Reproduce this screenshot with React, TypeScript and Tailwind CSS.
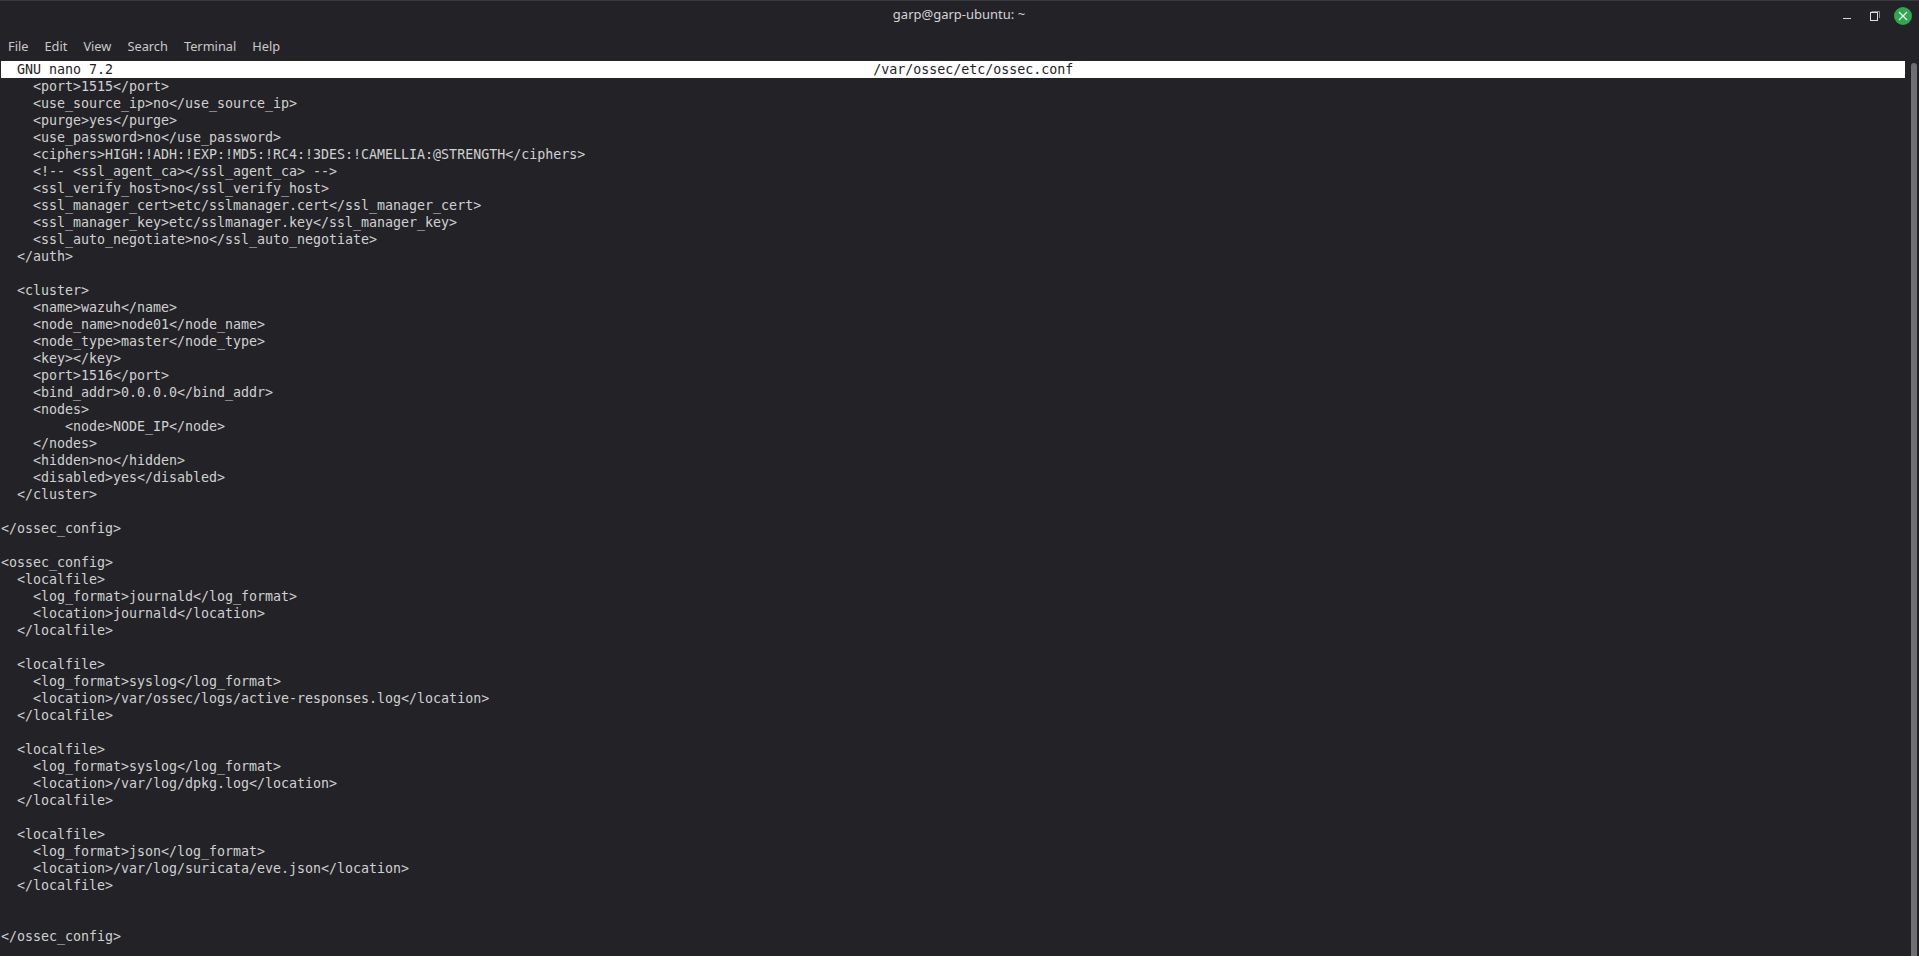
const menus = ['File', 'Edit', 'View', 'Search', 'Terminal', 'Help'];

const lines = [
  '    <port>1515</port>',
  '    <use_source_ip>no</use_source_ip>',
  '    <purge>yes</purge>',
  '    <use_password>no</use_password>',
  '    <ciphers>HIGH:!ADH:!EXP:!MD5:!RC4:!3DES:!CAMELLIA:@STRENGTH</ciphers>',
  '    <!-- <ssl_agent_ca></ssl_agent_ca> -->',
  '    <ssl_verify_host>no</ssl_verify_host>',
  '    <ssl_manager_cert>etc/sslmanager.cert</ssl_manager_cert>',
  '    <ssl_manager_key>etc/sslmanager.key</ssl_manager_key>',
  '    <ssl_auto_negotiate>no</ssl_auto_negotiate>',
  '  </auth>',
  '',
  '  <cluster>',
  '    <name>wazuh</name>',
  '    <node_name>node01</node_name>',
  '    <node_type>master</node_type>',
  '    <key></key>',
  '    <port>1516</port>',
  '    <bind_addr>0.0.0.0</bind_addr>',
  '    <nodes>',
  '        <node>NODE_IP</node>',
  '    </nodes>',
  '    <hidden>no</hidden>',
  '    <disabled>yes</disabled>',
  '  </cluster>',
  '',
  '</ossec_config>',
  '',
  '<ossec_config>',
  '  <localfile>',
  '    <log_format>journald</log_format>',
  '    <location>journald</location>',
  '  </localfile>',
  '',
  '  <localfile>',
  '    <log_format>syslog</log_format>',
  '    <location>/var/ossec/logs/active-responses.log</location>',
  '  </localfile>',
  '',
  '  <localfile>',
  '    <log_format>syslog</log_format>',
  '    <location>/var/log/dpkg.log</location>',
  '  </localfile>',
  '',
  '  <localfile>',
  '    <log_format>json</log_format>',
  '    <location>/var/log/suricata/eve.json</location>',
  '  </localfile>',
  '',
  '',
  '</ossec_config>',
];

const App = () => {
  return (
    <div className="h-[956px] w-[1919px] overflow-hidden bg-[#232327] border-t border-[#3a3a3c] flex flex-col">
      {/* Title bar */}
      <div className="h-[27px] grid grid-cols-[1fr_auto_1fr] items-center font-['Noto_Sans',sans-serif] text-[13px] text-[#d4d4d4]">
        <div />
        <div className="pr-px">garp@garp-ubuntu: ~</div>
        <div className="flex items-center justify-end gap-[14px] pr-[7px]">
          <svg width="10" height="10" viewBox="0 0 10 10" className="mt-[4px] mr-[3px]">
            <path d="M1 6.5h8" stroke="#d8d8d8" strokeWidth="1" />
          </svg>
          <svg width="11" height="11" viewBox="0 0 11 11" fill="none" className="mt-[4px]">
            <path d="M2.5 0.5h8V7" stroke="#8a8a8a" strokeWidth="1" />
            <rect x="1.5" y="1.5" width="7" height="8" stroke="#e0e0e0" strokeWidth="1" />
          </svg>
          <div className="w-[18px] h-[18px] mt-[3px] rounded-full bg-[#2fa750] flex items-center justify-center">
            <svg width="10" height="10" viewBox="0 0 10 10">
              <path d="M1 1l8 8M9 1l-8 8" stroke="#f0f0f0" strokeWidth="1.3" />
            </svg>
          </div>
        </div>
      </div>

      {/* Menu bar */}
      <div className="h-[33px] pt-[4px] flex items-center gap-[16px] pl-[8px] font-['Noto_Sans',sans-serif] text-[12.8px] text-[#c9c9c9]">
        {menus.map((menu) => (
          <span key={menu}>{menu}</span>
        ))}
      </div>

      {/* Terminal */}
      <div className="flex-1 flex min-h-0">
        <div className="flex-1 min-w-0 pl-px font-['DejaVu_Sans_Mono',monospace] text-[13.33px] leading-[17px] tracking-[-0.022px] text-[#d0d0d0] whitespace-pre">
          <div className="h-[17px] w-[1904px] bg-white text-[#232327]">
            {'  GNU nano 7.2'.padEnd(109, ' ')}/var/ossec/etc/ossec.conf
          </div>
          {lines.map((line, i) => (
            <div key={i} className="h-[17px]">
              {line}
            </div>
          ))}
        </div>
        <div className="w-[14px] shrink-0 pl-[6px] pt-[2px]">
          <div className="w-[6px] h-full rounded-t-full bg-[#6f6f71]" />
        </div>
      </div>
    </div>
  );
};

export default App;
